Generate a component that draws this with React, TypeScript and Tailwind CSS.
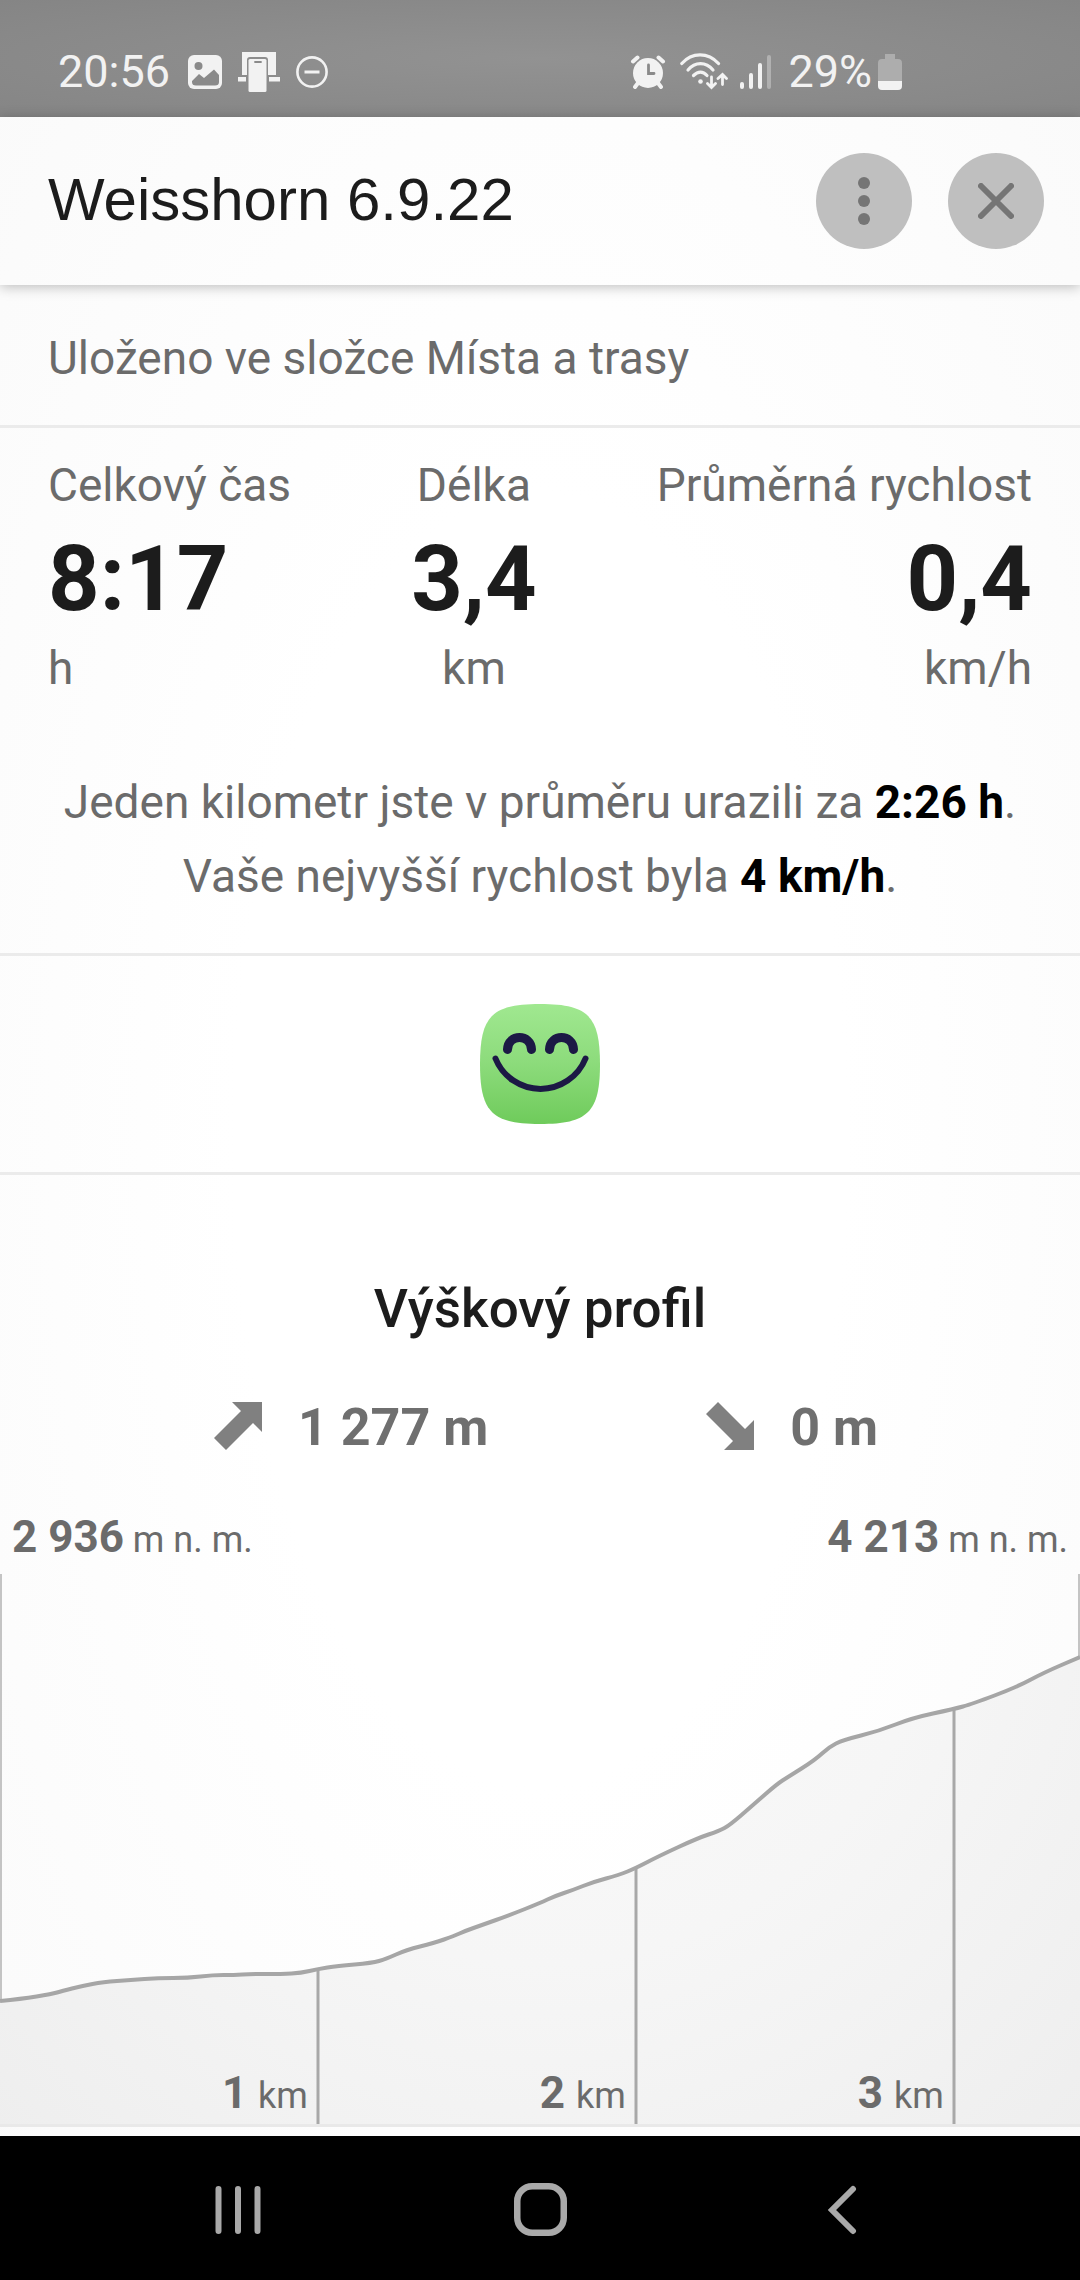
// imports
import React from "react";

// data
const stats = [
    { label: "Celkový čas", value: "8:17", unit: "h", align: "text-left" },
    { label: "Délka", value: "3,4", unit: "km", align: "text-center" },
    { label: "Průměrná rychlost", value: "0,4", unit: "km/h", align: "text-right" },
];

const kilometers = [
    { km: 1, x: 318, y: 1969 },
    { km: 2, x: 636, y: 1868 },
    { km: 3, x: 954, y: 1709 },
];

// elevation samples, chart top is at 1574
const chartTop = 1574;
const samples = [
    [0, 2001], [21, 1999], [52, 1994], [62, 1991], [82, 1986], [103, 1982], [131, 1980],
    [158, 1978], [188, 1978], [213, 1975], [234, 1975], [251, 1974], [282, 1974],
    [301, 1973], [318, 1969], [337, 1966], [372, 1963], [386, 1959], [406, 1950],
    [434, 1943], [454, 1936], [465, 1931], [482, 1925], [510, 1915], [540, 1903],
    [555, 1896], [573, 1890], [593, 1882], [619, 1875], [636, 1868], [659, 1856],
    [698, 1838], [719, 1831], [730, 1825], [753, 1805], [777, 1784], [788, 1777],
    [815, 1760], [829, 1747], [843, 1740], [879, 1731], [912, 1718], [954, 1709],
    [972, 1704], [1017, 1687], [1043, 1673], [1080, 1657],
];

// smooth line through the midpoints of the samples
const buildLine = () => {
    const points = samples.map(([x, y]) => [x, y - chartTop]);
    let d = `M${points[0][0]} ${points[0][1]}`;
    for (let i = 1; i < points.length - 1; i++) {
        const [x, y] = points[i];
        const [nx, ny] = points[i + 1];
        d += ` Q${x} ${y} ${(x + nx) / 2} ${(y + ny) / 2}`;
    }
    const last = points[points.length - 1];
    return `${d} L${last[0]} ${last[1]}`;
};

// status bar
const StatusBar = () => {
    return (
        <div className="flex h-[117px] items-center justify-between bg-radial from-[#929292] to-[#858585] pt-[26px] pr-[178px] pl-[58px] text-[45px] leading-[56px] text-[#f2f2f2]">
            <div className="flex items-center gap-4">
                <span className="mr-0.5">20:56</span>
                <svg width="34" height="34" viewBox="0 0 34 34">
                    <rect width="34" height="34" rx="6" fill="currentColor" />
                    <circle cx="10.500" cy="11" r="4" fill="#8a8a8a" />
                    <path d="M4 26 L11 19 L16 23 L26 14.500 L31 20 V27 Q31 30.500 27 30.500 H8 Q4 30.500 4 27 Z" fill="#8a8a8a" />
                </svg>
                <svg width="42" height="40" viewBox="0 0 42 40">
                    <path d="M4 0 H38 V23 H30 V8 Q30 5 27 5 H12 Q9 5 9 8 V23 H4 Z M0 25 H8 V29.500 H0 Z M31 25 H42 V29.500 H31 Z" fill="currentColor" />
                    <rect x="10.500" y="7" width="18" height="33" rx="1.500" fill="currentColor" />
                    <path d="M17 10 H23" stroke="#8a8a8a" strokeWidth="1.800" strokeLinecap="round" />
                </svg>
                <svg width="32" height="32" viewBox="0 0 32 32" fill="none" stroke="currentColor">
                    <circle cx="16" cy="16" r="14.600" strokeWidth="2.600" />
                    <path d="M8.500 16 H23.500" strokeWidth="3" />
                </svg>
            </div>
            <div className="flex items-center gap-3">
                <svg className="mr-0.5" width="36" height="34" viewBox="0 0 36 34" fill="none" stroke="currentColor" strokeWidth="4" strokeLinecap="round">
                    <circle cx="18" cy="18" r="15" fill="currentColor" stroke="none" />
                    <path d="M3 6.500 L7.500 2.500 M33 6.500 L28.500 2.500 M8 28 L5 32 M28 28 L31 32" />
                    <path d="M18.500 10 V18.500 H24" stroke="#8a8a8a" strokeWidth="2.800" />
                </svg>
                <svg width="48" height="37" viewBox="0 0 48 37" fill="none" stroke="currentColor" strokeWidth="3.200" strokeLinecap="round">
                    <path d="M1.800 10.500 C12 -1 28 -1 38.500 10.500" />
                    <path d="M8 17 C15 8.500 26 8.500 33 17" />
                    <path d="M13.500 22.500 C18 18 23 18 27 22.500" />
                    <circle cx="20.500" cy="28.500" r="2.300" fill="currentColor" stroke="none" />
                    <path d="M31.500 24 V34 M27.500 30.500 L31.500 34.500 L35.500 30.500 M42.500 31.500 V22 M38 25.500 L42.500 21.500 L46.500 25.500" strokeWidth="2.800" />
                </svg>
                <svg width="32" height="36" viewBox="0 0 32 36" stroke="currentColor" strokeWidth="4" strokeLinecap="round">
                    <path d="M2 30 V33 M11 21 V33 M20 11 V33" />
                    <path d="M29 3 V33" opacity="0.350" />
                </svg>
                <div className="ml-1 flex items-center gap-1.5">
                    <span>29%</span>
                    <svg width="24" height="36" viewBox="0 0 24 36">
                        <path d="M7 0 H17 V5 H20 Q24 5 24 9 V27 H0 V9 Q0 5 4 5 H7 Z" fill="#adadad" />
                        <path d="M0 27 H24 V32 Q24 36 20 36 H4 Q0 36 0 32 Z" fill="currentColor" />
                    </svg>
                </div>
            </div>
        </div>
    );
};

// title with the menu and close buttons
const Header = () => {
    const buttonCss = "flex size-24 items-center justify-center rounded-full bg-[#bfbfbf] text-[#757575]";
    return (
        <header className="relative flex h-[168px] items-center justify-between pr-9 pl-12 shadow-[0_2px_12px_rgba(0,0,0,0.25)]">
            <h1 className="pb-0.5 font-['Liberation_Sans',sans-serif] text-[60px] leading-[72px] text-[#1c1c1c]">
                Weisshorn 6.9.22
            </h1>
            <div className="flex gap-9">
                <button className={buttonCss} aria-label="Menu">
                    <svg width="12" height="48" viewBox="0 0 12 48" fill="currentColor">
                        <circle cx="6" cy="6" r="6" />
                        <circle cx="6" cy="24" r="6" />
                        <circle cx="6" cy="42" r="6" />
                    </svg>
                </button>
                <button className={buttonCss} aria-label="Zavřít">
                    <svg width="36" height="36" viewBox="0 0 36 36" stroke="currentColor" strokeWidth="6" strokeLinecap="round">
                        <path d="M3 3 L33 33 M33 3 L3 33" />
                    </svg>
                </button>
            </div>
        </header>
    );
};

// smiling face
const Smiley = () => {
    return (
        <svg width="120" height="120" viewBox="0 0 120 120" fill="none" stroke="#1c1945" strokeLinecap="round">
            <defs>
                <linearGradient id="face" x1="0" y1="0" x2="0" y2="1">
                    <stop offset="0" stopColor="#a0e890" />
                    <stop offset="0.500" stopColor="#8cdb7b" />
                    <stop offset="1" stopColor="#6fcb5b" />
                </linearGradient>
            </defs>
            <path d="M0 60 C0 12 12 0 60 0 C108 0 120 12 120 60 C120 108 108 120 60 120 C12 120 0 108 0 60 Z" fill="url(#face)" stroke="none" />
            <path d="M27.500 45.500 C28 29.500 51 29.500 51.500 45.500 M69.500 45.500 C70 29.500 93 29.500 93.500 45.500" strokeWidth="9" />
            <path d="M15.500 54.500 A48.500 48.500 0 0 0 105.500 54.500" strokeWidth="6" />
        </svg>
    );
};

// total climb and descent
const Climb = () => {
    return (
        <div className="mt-[55px] flex justify-center gap-[218px] pl-3 text-[52px] leading-16 font-bold text-[#6f6f6f]">
            <div className="flex items-center gap-9">
                <svg className="mb-1" width="48" height="48" viewBox="0 0 48 48" fill="#808080">
                    <path d="M18 0 H48 V30 L39 21 L12 48 L0 36 L27 9 Z" />
                </svg>
                <span>1 277 m</span>
            </div>
            <div className="flex items-center gap-9">
                <svg className="mb-1" width="48" height="48" viewBox="0 0 48 48" fill="#808080">
                    <path d="M12 0 L39 27 L48 18 V48 H18 L27 39 L0 12 Z" />
                </svg>
                <span>0 m</span>
            </div>
        </div>
    );
};

// elevation chart
const ElevationChart = () => {
    const line = buildLine();
    return (
        <div className="relative border-b-[3px] border-[#e9e9e9]">
            <svg className="block h-[550px] w-full" viewBox="0 0 1080 550" preserveAspectRatio="none" fill="none">
                <defs>
                    <radialGradient id="area" gradientUnits="userSpaceOnUse" cx="540" cy="0" r="780">
                        <stop offset="0" stopColor="#fafafa" />
                        <stop offset="0.500" stopColor="#f6f6f6" />
                        <stop offset="1" stopColor="#eeeeee" />
                    </radialGradient>
                </defs>
                <path d={`${line} V550 H0 Z`} fill="url(#area)" />
                <path d="M1 0 V427 M1079 0 V83" stroke="#c4c4c4" strokeWidth="2" />
                {kilometers.map(({ km, x, y }) => (
                    <path key={km} d={`M${x} ${y - chartTop} V550`} stroke="#a8a8a8" strokeWidth="3" />
                ))}
                <path d={line} stroke="#a6a6a6" strokeWidth="4" />
            </svg>
            <div className="absolute inset-x-0 bottom-0 flex text-right text-[36px] leading-[56px]">
                {kilometers.map(({ km }) => (
                    <p key={km} className="w-[29.44%] pr-[10px]">
                        <strong className="text-[44px] leading-none">{km} </strong>km
                    </p>
                ))}
            </div>
        </div>
    );
};

// android navigation bar
const NavigationBar = () => {
    const buttonCss = "flex h-full flex-1 items-center justify-center";
    return (
        <nav className="mt-[9px] flex h-36 items-center bg-black px-[87px] pt-[3px] text-[#a9a9a9]">
            <button className={buttonCss} aria-label="Poslední aplikace">
                <svg width="46" height="50" viewBox="0 0 46 50" stroke="currentColor" strokeWidth="6" strokeLinecap="round">
                    <path d="M3.500 4 V46 M23 4 V46 M42.500 4 V46" />
                </svg>
            </button>
            <button className={buttonCss} aria-label="Domů">
                <svg width="53" height="53" viewBox="0 0 53 53" fill="none" stroke="currentColor" strokeWidth="6.500">
                    <rect x="3.250" y="3.250" width="46.500" height="46.500" rx="15" />
                </svg>
            </button>
            <button className={buttonCss} aria-label="Zpět">
                <svg width="30" height="50" viewBox="0 0 30 50" fill="none" stroke="currentColor" strokeWidth="6" strokeLinecap="round">
                    <path d="M26 4 L5 25 L26 46" />
                </svg>
            </button>
        </nav>
    );
};

const App = () => {
    return (
        <div className="min-h-screen bg-radial from-white from-40% to-[#fafafa] font-[Roboto,sans-serif] text-[#6b6b6b]">
            <StatusBar />
            <Header />

            {/* Folder */}
            <p className="border-b-[3px] border-[#ebebeb] px-12 pt-[45px] pb-[39px] text-[46px] leading-[56px]">
                Uloženo ve složce Místa a trasy
            </p>

            {/* Stats */}
            <section className="border-b-[3px] border-[#ebebeb] px-12 pt-[29px] pb-10 text-[46px] leading-[56px]">
                <div className="flex justify-between">
                    {stats.map((stat) => (
                        <div key={stat.label} className={stat.align}>
                            <p>{stat.label}</p>
                            <p className="mt-[19px] text-[90px] leading-24 font-bold text-[#1c1c1c]">
                                {stat.value}
                            </p>
                            <p className="mt-3">{stat.unit}</p>
                        </div>
                    ))}
                </div>
                <div className="mt-[69px] text-center leading-[74px]">
                    <p>
                        Jeden kilometr jste v průměru urazili za{" "}
                        <strong className="text-black">2:26 h</strong>.
                    </p>
                    <p>
                        Vaše nejvyšší rychlost byla{" "}
                        <strong className="text-black">4 km/h</strong>.
                    </p>
                </div>
            </section>

            {/* Mood */}
            <section className="flex justify-center border-b-[3px] border-[#ebebeb] py-12">
                <Smiley />
            </section>

            {/* Elevation profile */}
            <section className="pt-[102px]">
                <h2 className="text-center text-[53px] leading-16 font-medium text-[#1c1c1c]">
                    Výškový profil
                </h2>
                <Climb />
                <div className="mt-[52px] mb-1.5 flex justify-between px-3 text-[36px] leading-[56px]">
                    <p>
                        <strong className="text-[44px] leading-none">2 936</strong> m n. m.
                    </p>
                    <p>
                        <strong className="text-[44px] leading-none">4 213</strong> m n. m.
                    </p>
                </div>
                <ElevationChart />
            </section>

            <NavigationBar />
        </div>
    );
};

// export
export default App;
